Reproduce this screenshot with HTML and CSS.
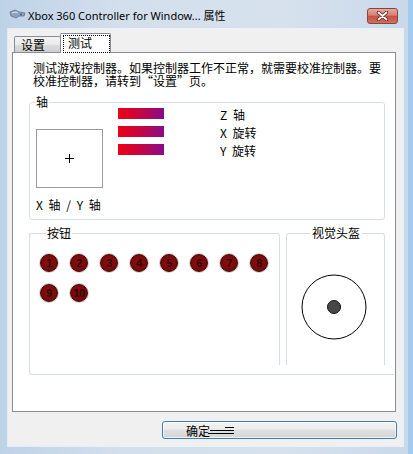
FILE: index.html
```html
<!DOCTYPE html>
<html lang="zh-CN">
<head>
	<meta charset="utf-8" />
	<title>Xbox 360 Controller for Windows 属性</title>
	<link rel="stylesheet" href="styles.css">
</head>
<body>
	<div class="window">
		<div class="titlebar">
			<svg class="app-icon" width="17" height="10" viewBox="0 0 17 10">
				<path d="M1 3 L6 1 L10 3 L16 4 L15 7 L10 7 L7 9 L2 7 Z" fill="#8ea3bb" stroke="#5d7188" stroke-width="0.8"/>
				<path d="M3 4 L7 3 L9 4" fill="none" stroke="#dfe8f2" stroke-width="1"/>
				<circle cx="12" cy="5.5" r="1" fill="#4d6078"/>
			</svg>
			<span class="title">Xbox 360 Controller for Window... 属性</span>
			<div class="close">
				<svg width="13" height="10" viewBox="0 0 13 10">
					<path d="M2.5 1.5 L10.5 8.5 M10.5 1.5 L2.5 8.5" stroke="#5a1d16" stroke-width="3.4" stroke-linecap="round"/>
					<path d="M2.5 1.5 L10.5 8.5 M10.5 1.5 L2.5 8.5" stroke="#ffffff" stroke-width="1.8" stroke-linecap="round"/>
				</svg>
			</div>
		</div>

		<div class="client">
			<div class="tabs">
				<div class="tab">设置</div>
				<div class="tab active"><span class="focus">测试</span></div>
			</div>

			<div class="panel">
				<p class="intro">测试游戏控制器。如果控制器工作不正常，就需要校准控制器。要<br />校准控制器，请转到“设置”页。</p>

				<fieldset class="group axis">
					<legend>轴</legend>
					<div class="axis-row">
						<div class="xy">
							<div class="xy-box"></div>
							<div class="xy-label">X 轴 / Y 轴</div>
						</div>
						<div class="bars">
							<div class="bar"></div>
							<div class="bar"></div>
							<div class="bar"></div>
						</div>
						<div class="names">
							<div>Z 轴</div>
							<div>X 旋转</div>
							<div>Y 旋转</div>
						</div>
					</div>
				</fieldset>

				<div class="lower">
					<fieldset class="group buttons">
						<legend>按钮</legend>
						<div class="led-grid">
							<span class="led">1</span>
							<span class="led">2</span>
							<span class="led">3</span>
							<span class="led">4</span>
							<span class="led">5</span>
							<span class="led">6</span>
							<span class="led">7</span>
							<span class="led">8</span>
							<span class="led">9</span>
							<span class="led">10</span>
						</div>
					</fieldset>
					<fieldset class="group pov">
						<legend>视觉头盔</legend>
						<svg class="pov-dial" width="66" height="66" viewBox="0 0 66 66">
							<circle cx="33" cy="33" r="32" fill="none" stroke="#000" stroke-width="1"/>
							<circle cx="33" cy="33" r="6.5" fill="#484848" stroke="#111" stroke-width="1"/>
						</svg>
					</fieldset>
				</div>
			</div>

			<div class="actions">
				<button class="ok">确定<span class="glitch"></span></button>
			</div>
		</div>
	</div>
</body>
</html>
```

FILE: styles.css
```css
body {
	margin: 0;
	font-family: "Noto Sans CJK SC", sans-serif;
	font-size: 12px;
	color: #000;
}

.window {
	box-sizing: border-box;
	width: 413px;
	height: 454px;
	padding: 0 5px 8px 8px;
	border-right: 5px solid #a2cbef;
	background: linear-gradient(to right, #bed2e7, #d3dfec 30%, #d6e1ed 70%, #c9d9ea);
	display: flex;
	flex-direction: column;
}

.titlebar {
	height: 29px;
	flex: none;
	display: flex;
	align-items: flex-start;
	padding-left: 1px;
}

.app-icon {
	margin-top: 9px;
	flex: none;
}

.title {
	margin-left: 2px;
	padding-top: 8px;
	line-height: 15px;
	font-family: "Noto Sans", "Noto Sans CJK SC", sans-serif;
	font-size: 11px;
	color: #000;
	white-space: nowrap;
}

.close {
	box-sizing: border-box;
	width: 31px;
	height: 16px;
	margin: 8px 5px 0 auto;
	border: 1px solid #86453c;
	border-radius: 3px;
	background: linear-gradient(#e7a89e, #d87f71 45%, #c74f3f 50%, #d0705f);
	display: flex;
	align-items: center;
	justify-content: center;
}

.client {
	flex: 1;
	background: #f0f0f0;
	padding: 4px 0 0 4px;
	outline: 1px solid rgba(255, 255, 255, 0.55);
}

/* tabs */

.tabs {
	height: 19px;
	display: flex;
	align-items: flex-end;
	padding-left: 2px;
}

.tab {
	box-sizing: border-box;
	width: 47px;
	height: 16px;
	padding-left: 6px;
	border: 1px solid #898c95;
	border-bottom: none;
	border-radius: 2px 2px 0 0;
	background: linear-gradient(#f2f2f2, #ebebeb 50%, #dddddd 51%, #cfcfcf);
	line-height: 15px;
}

.tab.active {
	position: relative;
	z-index: 1;
	width: 51px;
	height: 20px;
	margin: 0 0 -1px -1px;
	padding: 1px 0 0 2px;
	background: #fff;
}

.focus {
	display: block;
	box-sizing: border-box;
	height: 18px;
	padding-left: 4px;
	border: 1px dotted #000;
	line-height: 14px;
}

/* page */

.panel {
	box-sizing: border-box;
	width: 384px;
	height: 360px;
	border: 1px solid #898c95;
	background: #fff;
	padding-top: 8px;
}

.intro {
	margin: 0 0 0 20px;
	line-height: 13px;
	white-space: nowrap;
}

.group {
	box-sizing: border-box;
	margin: 0;
	padding: 0;
	min-width: 0;
	border: 1px solid #d5dfe5;
	border-radius: 3px;
}

.group legend {
	padding: 0 1px;
	margin-left: 5px;
	line-height: 12px;
}

.axis {
	width: 356px;
	margin: 9px 0 0 16px;
	padding-bottom: 8px;
}

.axis-row {
	display: flex;
	align-items: flex-start;
	padding-left: 6px;
}

.xy {
	width: 67px;
	margin-top: 21px;
}

.xy-box {
	box-sizing: border-box;
	height: 59px;
	border: 1px solid #9a9a9a;
	background:
		linear-gradient(#000, #000) center / 9px 1px no-repeat,
		linear-gradient(#000, #000) center / 1px 9px no-repeat;
}

.xy-label {
	margin-top: 11px;
	line-height: 12px;
	word-spacing: 3px;
	white-space: nowrap;
}

.bars {
	margin-left: 15px;
}

.bar {
	width: 46px;
	height: 11px;
	margin-bottom: 7px;
	background: linear-gradient(to right, #ec0017, #c8063c 45%, #8b0a8c);
}

.names {
	margin: -2px 0 0 56px;
	line-height: 18px;
	word-spacing: 3px;
}

.lower {
	box-sizing: border-box;
	width: 365px;
	margin: 13px 0 0 16px;
	padding-bottom: 9px;
	border-left: 1px solid #d5dfe5;
	border-bottom: 1px solid #d5dfe5;
	border-bottom-left-radius: 3px;
	display: flex;
	align-items: flex-start;
}

.buttons {
	width: 251px;
	height: 138px;
	margin: -6px 0 0 -1px;
	padding: 15px 0 0 10px;
	border-bottom: none;
	border-radius: 3px 3px 0 0;
}

.buttons legend {
	margin-left: 6px;
}

.led-grid {
	display: grid;
	grid-template-columns: repeat(8, 18px);
	gap: 12px;
}

.led {
	box-sizing: border-box;
	width: 18px;
	height: 18px;
	border-radius: 50%;
	border: 1px solid #3b0505;
	background: radial-gradient(circle at 50% 45%, #8c0f0f, #6c0707);
	box-shadow: 0 0 0 1px rgba(150, 90, 90, 0.3);
	color: #2e0000;
	font: bold 11px/16px "Liberation Sans", sans-serif;
	text-align: center;
	letter-spacing: -0.5px;
}

.pov {
	width: 99px;
	height: 138px;
	margin: -6px 0 0 6px;
	border-bottom: none;
	border-radius: 3px 3px 0 0;
}

.pov legend {
	margin-left: 23px;
	padding: 0 2px;
}

.pov-dial {
	display: block;
	margin: 35px 0 0 14px;
}

/* bottom button */

.actions {
	padding-top: 9px;
}

.ok {
	box-sizing: border-box;
	width: 235px;
	height: 18px;
	margin-left: 150px;
	padding: 0 0 0 23px;
	border: 1px solid #3c7fb1;
	border-radius: 3px;
	background: linear-gradient(#f4f4f4, #ececec 45%, #e0e0e0 50%, #d4d4d4);
	box-shadow: inset 0 0 0 1px rgba(255, 255, 255, 0.7);
	font-family: "Noto Sans CJK SC", sans-serif;
	font-size: 12px;
	line-height: 15px;
	color: #000;
	text-align: left;
	display: flex;
	align-items: center;
}

.glitch {
	display: inline-block;
	width: 26px;
	height: 8px;
	margin-left: -2px;
	margin-top: 2px;
	background:
		linear-gradient(#000, #000) 17px 0 / 9px 1px no-repeat,
		linear-gradient(#000, #000) 2px 3px / 24px 1px no-repeat,
		linear-gradient(#000, #000) 0 6px / 26px 1px no-repeat;
}
```
